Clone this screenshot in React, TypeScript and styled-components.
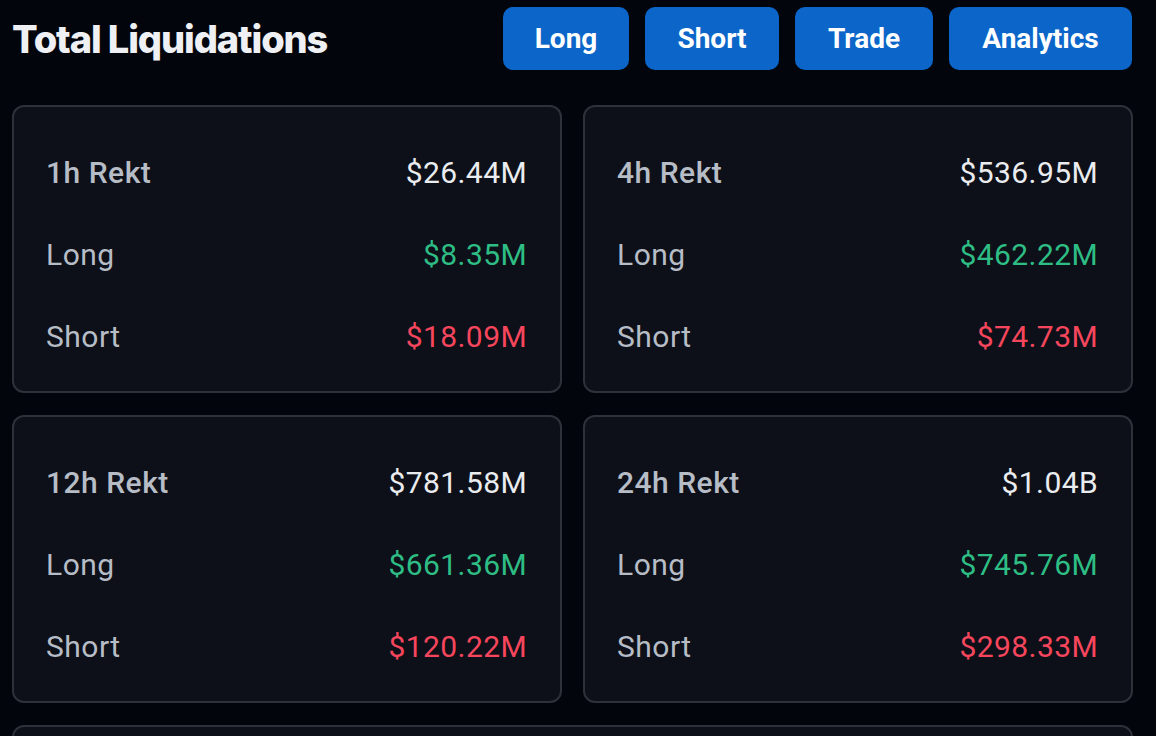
import React from 'react'
import styled, { createGlobalStyle } from 'styled-components'

const GlobalStyle = createGlobalStyle`
  html, body {
    margin: 0;
    padding: 0;
    background: #03050d;
  }
  body {
    font-family: Roboto, "Noto Sans", sans-serif;
    color: #eaecef;
  }
`

const Page = styled.div`
  width: 1156px;
  height: 736px;
  overflow: hidden;
  padding: 7px 24px 0 12px;
  box-sizing: border-box;
`

const Header = styled.div`
  display: flex;
  align-items: center;
  justify-content: space-between;
  height: 63px;
`

const Title = styled.h1`
  margin: 0;
  font-family: Inter, sans-serif;
  font-weight: 800;
  font-size: 38px;
  letter-spacing: -1.1px;
  color: #eef0f4;
`

const ButtonRow = styled.div`
  display: flex;
  gap: 16px;
`

const NavButton = styled.button<{ $w: number }>`
  width: ${({ $w }) => $w}px;
  height: 63px;
  border: none;
  border-radius: 10px;
  background: #0c66c9;
  color: #fff;
  font-family: Roboto, sans-serif;
  font-weight: 700;
  font-size: 28px;
  cursor: pointer;
`

const Grid = styled.div`
  margin-top: 35px;
  display: grid;
  grid-template-columns: 550px 550px;
  column-gap: 21px;
  row-gap: 22px;
`

const Card = styled.div`
  height: 288px;
  box-sizing: border-box;
  padding: 24px 33px 15px 32px;
  border: 2px solid #2d3139;
  border-radius: 12px;
  background: #0d1018;
`

const WideCard = styled(Card)`
  grid-column: 1 / span 2;
`

const Row = styled.div`
  display: flex;
  align-items: center;
  justify-content: space-between;
  height: 82px;
`

const Label = styled.span<{ $head?: boolean }>`
  font-size: 30px;
  letter-spacing: 0.5px;
  font-weight: ${({ $head }) => ($head ? 500 : 400)};
  color: #b7bdc6;
`

const Value = styled.span<{ $tone: 'white' | 'green' | 'red' }>`
  font-size: 30px;
  letter-spacing: 0.4px;
  color: ${({ $tone }) =>
    $tone === 'green' ? '#2ebd85' : $tone === 'red' ? '#f6465d' : '#eaecef'};
`

const cards = [
  { period: '1h', total: '$26.44M', long: '$8.35M', short: '$18.09M' },
  { period: '4h', total: '$536.95M', long: '$462.22M', short: '$74.73M' },
  { period: '12h', total: '$781.58M', long: '$661.36M', short: '$120.22M' },
  { period: '24h', total: '$1.04B', long: '$745.76M', short: '$298.33M' },
]

const buttons = [
  { text: 'Long', w: 126 },
  { text: 'Short', w: 134 },
  { text: 'Trade', w: 138 },
  { text: 'Analytics', w: 183 },
]

export default function App() {
  return (
    <>
      <GlobalStyle />
      <Page>
        <Header>
          <Title>Total Liquidations</Title>
          <ButtonRow>
            {buttons.map((b) => (
              <NavButton key={b.text} $w={b.w}>
                {b.text}
              </NavButton>
            ))}
          </ButtonRow>
        </Header>
        <Grid>
          {cards.map((c) => (
            <Card key={c.period}>
              <Row>
                <Label $head>{c.period} Rekt</Label>
                <Value $tone="white">{c.total}</Value>
              </Row>
              <Row>
                <Label>Long</Label>
                <Value $tone="green">{c.long}</Value>
              </Row>
              <Row>
                <Label>Short</Label>
                <Value $tone="red">{c.short}</Value>
              </Row>
            </Card>
          ))}
          <WideCard />
        </Grid>
      </Page>
    </>
  )
}
